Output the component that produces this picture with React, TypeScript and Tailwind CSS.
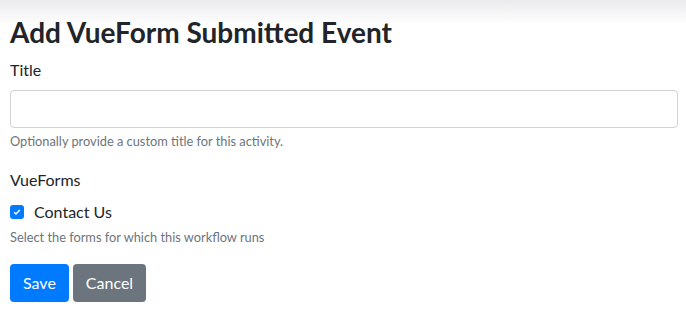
import React from 'react'

const App = () => {
  return (
    <div
      className="min-h-[328px] w-full bg-[linear-gradient(to_bottom,#ebebed_0px,#ffffff_26px)] pl-[10px] pr-[8px] pt-[16px] text-[16px] leading-[1.5] text-[#212529]"
      style={{ fontFamily: 'Lato, "Open Sans", sans-serif' }}
    >
      <h3 className="mb-[8px] text-[28px] font-bold leading-[1.2]">Add VueForm Submitted Event</h3>

      <div className="mb-[17px]">
        <label className="mb-[8px] block font-normal">Title</label>
        <input
          type="text"
          className="block h-[38px] w-full rounded-[4px] border border-[#ced4da] bg-white px-[12px] outline-none"
        />
        <small className="mt-[4px] block text-[12.8px] text-[#6c757d]">
          Optionally provide a custom title for this activity.
        </small>
      </div>

      <div className="mb-[17px]">
        <label className="mb-[8px] block font-normal">VueForms</label>
        <div className="flex items-center gap-[10px]">
          <span className="flex h-[14px] w-[14px] items-center justify-center rounded-[3px] bg-[#007bff]">
            <svg viewBox="0 0 8 8" className="h-[8px] w-[8px]">
              <path d="M1.2 4.2 L3 6 L6.8 2" fill="none" stroke="#fff" strokeWidth="1.4" />
            </svg>
          </span>
          <span>Contact Us</span>
        </div>
        <small className="mt-[4px] block text-[12.8px] text-[#6c757d]">
          Select the forms for which this workflow runs
        </small>
      </div>

      <div className="flex gap-[4px]">
        <button className="h-[38px] rounded-[4px] bg-[#007bff] px-[13px] text-white">Save</button>
        <button className="h-[38px] rounded-[4px] bg-[#6c757d] px-[13px] text-white">Cancel</button>
      </div>
    </div>
  )
}

export default App
